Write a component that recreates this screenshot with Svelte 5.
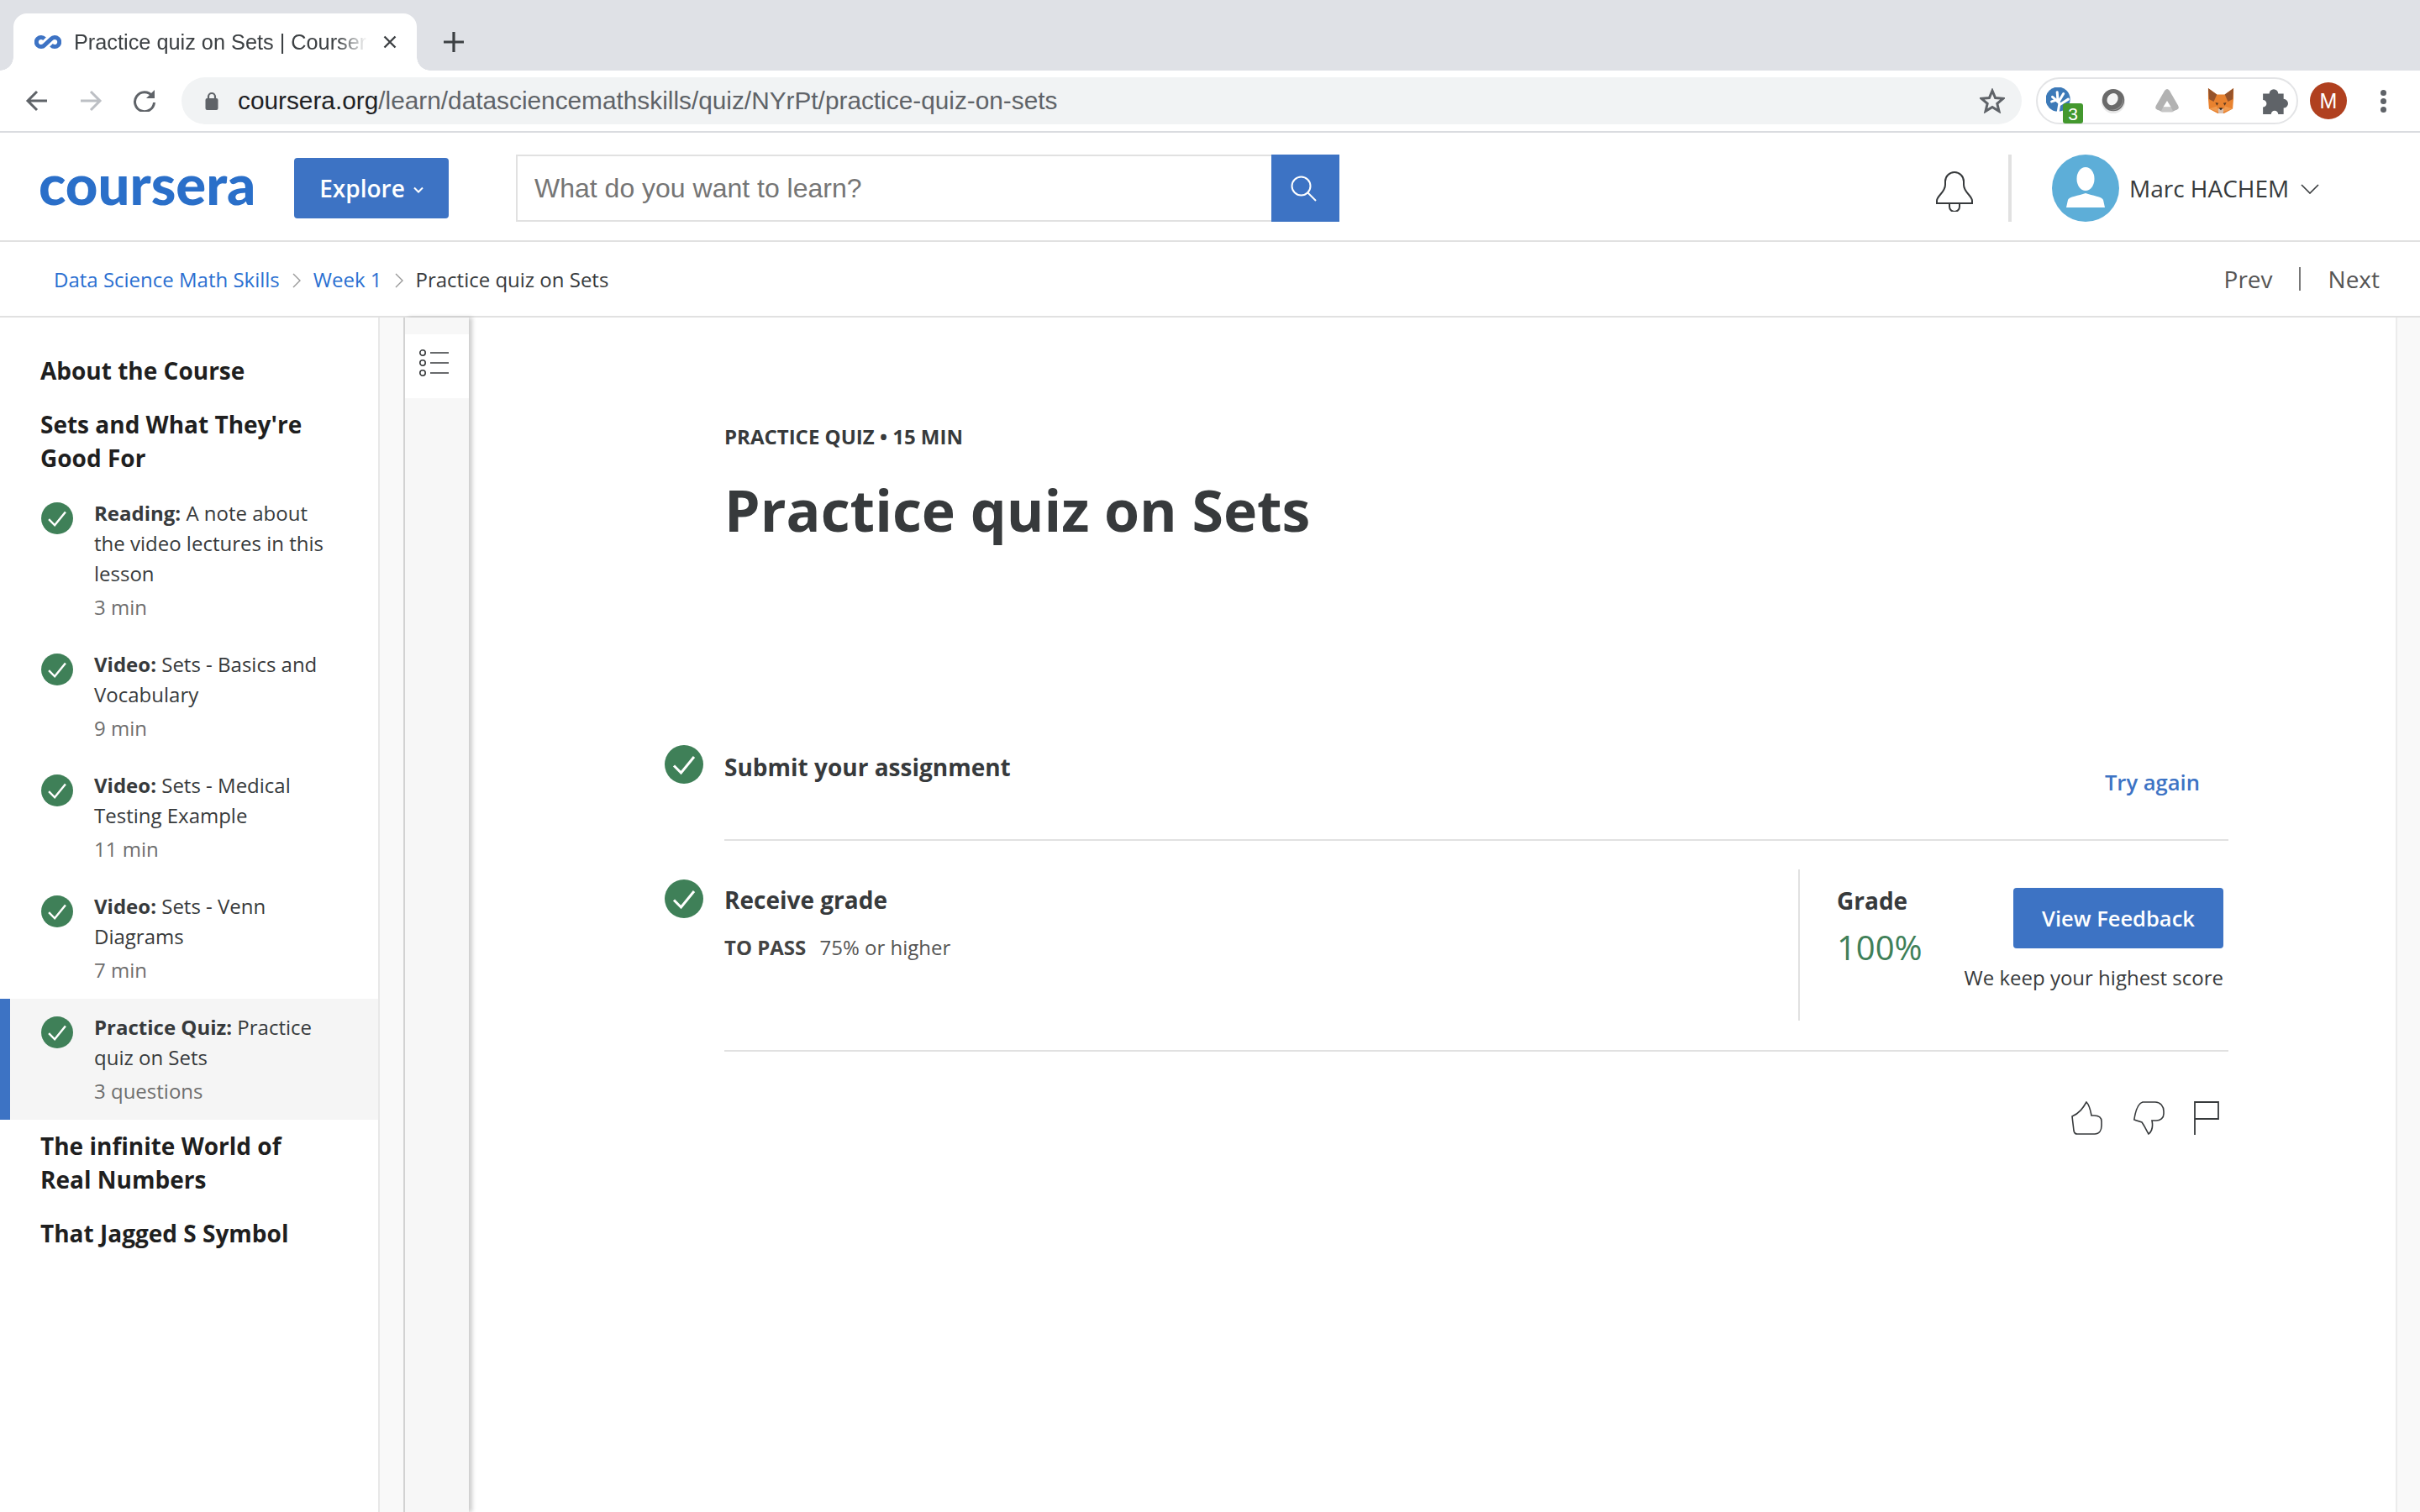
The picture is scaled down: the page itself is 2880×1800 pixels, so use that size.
<script>
  const items = [
    { kind: 'Reading:', text: 'A note about the video lectures in this lesson', meta: '3 min' },
    { kind: 'Video:', text: 'Sets - Basics and Vocabulary', meta: '9 min' },
    { kind: 'Video:', text: 'Sets - Medical Testing Example', meta: '11 min' },
    { kind: 'Video:', text: 'Sets - Venn Diagrams', meta: '7 min' },
    { kind: 'Practice Quiz:', text: 'Practice quiz on Sets', meta: '3 questions', active: true }
  ];
</script>

{#snippet check(cls)}
  <svg class={cls} viewBox="0 0 46 46" aria-hidden="true">
    <circle cx="23" cy="23" r="23" fill="#3f8058" />
    <path d="M11 24.5 L19.5 33 L35 14" fill="none" stroke="#fff" stroke-width="3" />
  </svg>
{/snippet}

<div class="page">
  <div class="tabstrip">
    <div class="tab">
      <svg class="favicon" viewBox="0 0 32 18" aria-hidden="true">
        <path d="M12 5.2 A5.6 5.6 0 1 0 12 12.8 L20 5.2 A5.6 5.6 0 1 1 20 12.8" fill="none" stroke="#3d73c4" stroke-width="5" />
      </svg>
      <span class="tabtitle">Practice quiz on Sets | Courser</span>
      <svg class="tabclose" viewBox="0 0 16 16" aria-hidden="true"><path d="M1.5 1.5 L14.5 14.5 M14.5 1.5 L1.5 14.5" stroke="#3c4043" stroke-width="2.4" /></svg>
    </div>
    <svg class="plus" viewBox="0 0 24 24" aria-hidden="true"><path d="M12 0 V24 M0 12 H24" stroke="#3c4043" stroke-width="3.2" /></svg>
  </div>

  <div class="toolbar">
    <svg class="navicon first" viewBox="0 0 26 26" aria-hidden="true"><path d="M25 13 H3 M13 2 L2 13 L13 24" fill="none" stroke="#5f6368" stroke-width="3" /></svg>
    <svg class="navicon" viewBox="0 0 26 26" aria-hidden="true"><path d="M1 13 H23 M13 2 L24 13 L13 24" fill="none" stroke="#bcbfc4" stroke-width="3" /></svg>
    <svg class="navicon" viewBox="0 0 28 26" aria-hidden="true"><path d="M23 7 A11.5 11.5 0 1 0 25.5 15" fill="none" stroke="#5f6368" stroke-width="3" /><path d="M26 0 V10 H16 Z" fill="#5f6368" /></svg>
    <div class="omnibox">
      <svg class="lock" viewBox="0 0 16 22" aria-hidden="true"><path d="M4 9 V6 A4 4 0 0 1 12 6 V9" fill="none" stroke="#5f6368" stroke-width="2.2" /><rect x="0.5" y="8" width="15" height="14" rx="2" fill="#5f6368" /></svg>
      <span class="url"><b>coursera.org</b>/learn/datasciencemathskills/quiz/NYrPt/practice-quiz-on-sets</span>
      <svg class="star" viewBox="0 0 30 30" aria-hidden="true"><path d="M15 3 L18.6 11.6 L27.8 12.3 L20.8 18.3 L23 27.4 L15 22.5 L7 27.4 L9.2 18.3 L2.2 12.3 L11.4 11.6 Z" fill="none" stroke="#5f6368" stroke-width="3" /></svg>
    </div>
    <div class="extensions">
      <div class="ext">
        <svg viewBox="0 0 34 34" aria-hidden="true">
          <circle cx="15" cy="15" r="15.5" fill="#3d7ab8" />
          <path d="M15 32 L17 20 L8 12 M13 16 L7 18 M15 18 L14 6 M16 18 L22 8 M17 22 L28 15" fill="none" stroke="#fff" stroke-width="3.2" stroke-linecap="round" />
        </svg>
        <span class="badge">3</span>
      </div>
      <div class="ext">
        <svg viewBox="0 0 34 34" aria-hidden="true">
          <circle cx="17" cy="18" r="15" fill="#e8e8e8" />
          <circle cx="17" cy="16" r="14" fill="#6a6a6a" />
          <path d="M29 12 A13 13 0 0 1 12 28 A14 14 0 0 0 29 12 Z" fill="#9c9c9c" />
          <ellipse cx="16" cy="15" rx="6.5" ry="8" fill="#f4f4f4" transform="rotate(35 16 15)" />
        </svg>
      </div>
      <div class="ext">
        <svg viewBox="0 0 34 34" aria-hidden="true">
          <path d="M17 2 C18 2 19 3 20 4 L31 23 C32 25 32 27 30 28 L23 31 H11 L4 28 C2 27 2 25 3 23 L14 4 C15 3 16 2 17 2 Z" fill="#b2b2b2" />
          <path d="M17 17 L12 25 H22 Z" fill="#fff" />
          <path d="M12 25 H22 L25 31 H9 Z" fill="#c6c6c6" />
        </svg>
      </div>
      <div class="ext">
        <svg viewBox="0 0 34 34" aria-hidden="true">
          <path d="M1 1 L12 9 H22 L33 1 L33 14 L32 27 L21 33 H13 L2 27 L1 14 Z" fill="#e8822f" />
          <path d="M1 1 L12 9 L8 18 L2 15 Z" fill="#96532a" />
          <path d="M33 1 L22 9 L26 18 L32 15 Z" fill="#96532a" />
          <path d="M10 19 L14 20 L12 23 Z M24 19 L20 20 L22 23 Z" fill="#5c3a20" />
          <path d="M13 27 L21 27 L20 33 H14 Z" fill="#d7c1b3" />
          <path d="M14.5 26 H19.5 L17 29 Z" fill="#1c1c1c" />
          <path d="M2 27 L12 24 L14 31 Z M32 27 L22 24 L20 31 Z" fill="#f09a4e" />
        </svg>
      </div>
      <div class="ext">
        <svg viewBox="0 0 30 30" aria-hidden="true">
          <path d="M2 7 H9 A5 5 0 0 1 19 7 H25 V13 A5 5 0 0 1 25 23 V30 H19 A4 4 0 0 0 11 30 H2 V22 A4 4 0 0 0 2 14 Z" fill="#5f6368" />
        </svg>
      </div>
    </div>
    <span class="profile">M</span>
    <span class="dots"><i></i><i></i><i></i></span>
  </div>

  <header class="siteheader">
    <span class="logo">coursera</span>
    <button class="explore">Explore <svg viewBox="0 0 12 8" aria-hidden="true"><path d="M1 1.5 L6 6.5 L11 1.5" fill="none" stroke="#fff" stroke-width="2" /></svg></button>
    <div class="search">
      <span class="placeholder">What do you want to learn?</span>
      <span class="searchbtn">
        <svg viewBox="0 0 32 32" aria-hidden="true"><circle cx="13.5" cy="13.5" r="11" fill="none" stroke="#fff" stroke-width="2" /><path d="M21.5 21.5 L31 31" stroke="#fff" stroke-width="2" /></svg>
      </span>
    </div>
    <svg class="bell" viewBox="0 0 44 48" aria-hidden="true">
      <path d="M1 38 V35 C1 29 11 25 11 16 V12 A11 11 0 0 1 33 12 V16 C33 25 43 29 43 35 V38 Z M16 38 V42 A6 6 0 0 0 28 42 V38" fill="none" stroke="#373a3c" stroke-width="2" />
    </svg>
    <span class="vrule"></span>
    <span class="avatar">
      <svg viewBox="0 0 80 80" aria-hidden="true">
        <ellipse cx="40" cy="29" rx="10.5" ry="14" fill="#fff" />
        <path d="M17 63 L19 54 C20 50 32 49 40 46 C48 49 60 50 61 54 L63 63 Z" fill="#fff" />
      </svg>
    </span>
    <span class="username">Marc HACHEM</span>
    <svg class="userchev" viewBox="0 0 22 12" aria-hidden="true"><path d="M1 1 L11 11 L21 1" fill="none" stroke="#373a3c" stroke-width="1.6" /></svg>
  </header>

  <nav class="crumbs">
    <a href="#c">Data Science Math Skills</a>
    <svg viewBox="0 0 10 18" aria-hidden="true"><path d="M1 1 L9 9 L1 17" fill="none" stroke="#999" stroke-width="1.4" /></svg>
    <a href="#w">Week 1</a>
    <svg viewBox="0 0 10 18" aria-hidden="true"><path d="M1 1 L9 9 L1 17" fill="none" stroke="#999" stroke-width="1.4" /></svg>
    <span>Practice quiz on Sets</span>
    <div class="pager"><span>Prev</span><i></i><span>Next</span></div>
  </nav>

  <div class="body">
    <aside class="sidebar">
      <h3>About the Course</h3>
      <h3>Sets and What They're Good For</h3>
      <ul>
        {#each items as item}
          <li class:active={item.active}>
            {@render check('smallcheck')}
            <div>
              <p><b>{item.kind}</b> {item.text}</p>
              <small>{item.meta}</small>
            </div>
          </li>
        {/each}
      </ul>
      <h3>The infinite World of Real Numbers</h3>
      <h3>That Jagged S Symbol</h3>
    </aside>

    <div class="gutter"></div>

    <div class="rail">
      <span class="railbtn">
        <svg viewBox="0 0 36 32" aria-hidden="true">
          <g fill="none" stroke="#373a3c" stroke-width="1.6">
            <circle cx="4" cy="4" r="3.2" /><circle cx="4" cy="16" r="3.2" /><circle cx="4" cy="28" r="3.2" />
            <path d="M13 4 H35 M13 16 H35 M13 28 H35" />
          </g>
        </svg>
      </span>
    </div>

    <main class="main">
      <div class="eyebrow">PRACTICE QUIZ • 15 MIN</div>
      <h1>Practice quiz on Sets</h1>

      <section class="submit">
        {@render check('bigcheck')}
        <h2>Submit your assignment</h2>
        <a class="again" href="#a">Try again</a>
      </section>

      <section class="receive">
        {@render check('bigcheck')}
        <div class="pass">
          <h2>Receive grade</h2>
          <p><b>TO PASS</b> 75% or higher</p>
        </div>
        <div class="grade">
          <div>
            <h2>Grade</h2>
            <div class="score">100%</div>
          </div>
          <div class="feedback">
            <button>View Feedback</button>
            <span>We keep your highest score</span>
          </div>
        </div>
      </section>

      <div class="reactions">
        <svg class="thumb" viewBox="0 0 38 40" aria-hidden="true"><path d="M18 1 C14 8 10 14 1 18 L3 35 C3.5 38 5 39 7 39 H28 C33 39 36 35 36 29 V24 C36 19 32 17 27 17 H24 C23 12 22 5 18 1 Z" fill="none" stroke="#373a3c" stroke-width="1.6" /></svg>
        <svg class="thumb down" viewBox="0 0 38 40" aria-hidden="true"><path d="M11 1 H26 C32 1 36 6 36 12 V15 C36 20 32 23 27 23 H22 C23 28 23 35 18 39 C15 34 13 29 10 25 L0.8 22 C2 14 4 3 11 1 Z" fill="none" stroke="#373a3c" stroke-width="1.6" /></svg>
        <svg class="flag" viewBox="0 0 30 40" aria-hidden="true"><path d="M1 40 V1 H29 V21 H1" fill="none" stroke="#373a3c" stroke-width="1.8" /></svg>
      </div>
    </main>

    <div class="edge"></div>
  </div>
</div>

<style>
  :global(body) { margin: 0; background: #fff; }
  .page { width: 2880px; height: 1800px; overflow: hidden; display: flex; flex-direction: column; font-family: "Open Sans", "Noto Sans", sans-serif; color: #373a3c; }
  p, h1, h2, h3, ul { margin: 0; padding: 0; }
  a { color: #2a6fd1; text-decoration: none; }
  button { border: 0; font-family: inherit; color: #fff; background: #3d73c4; border-radius: 4px; }

  .tabstrip { height: 84px; flex: none; background: #dfe1e6; display: flex; align-items: flex-end; padding-left: 16px; box-sizing: border-box; }
  .tab { position: relative; width: 480px; height: 68px; background: #fff; border-radius: 16px 16px 0 0; display: flex; align-items: center; box-sizing: border-box; padding: 0 24px 0 25px; }
  .tab::before, .tab::after { content: ""; position: absolute; bottom: 0; width: 16px; height: 16px; background: radial-gradient(circle at var(--cx) 0, #dfe1e6 15.5px, #fff 16px); }
  .tab::before { left: -16px; --cx: 0; }
  .tab::after { right: -16px; --cx: 16px; }
  .favicon { width: 32px; height: 18px; flex: none; }
  .tabtitle { font: 25.3px "Liberation Sans", sans-serif; color: #3c4043; margin-left: 15px; width: 349px; white-space: nowrap; overflow: hidden; -webkit-mask-image: linear-gradient(to right, #000 90%, transparent); mask-image: linear-gradient(to right, #000 90%, transparent); }
  .tabclose { width: 16px; height: 16px; margin-left: 19px; flex: none; }
  .plus { width: 24px; height: 24px; margin: 0 0 22px 32px; }

  .toolbar { height: 74px; flex: none; box-sizing: border-box; border-bottom: 2px solid #dadce0; display: flex; align-items: center; }
  .navicon { width: 28px; height: 26px; margin-left: 36px; }
  .navicon.first { margin-left: 30px; }
  .omnibox { width: 2190px; height: 56px; margin-left: 30px; border-radius: 28px; background: #f1f3f4; display: flex; align-items: center; box-sizing: border-box; padding: 0 20px 0 28px; }
  .lock { width: 16px; height: 22px; }
  .url { font: 29.8px "Liberation Sans", sans-serif; color: #5f6368; margin-left: 23px; flex: 1; white-space: nowrap; }
  .url b { font-weight: 400; color: #202124; }
  .star { width: 30px; height: 30px; }
  .extensions { width: 312px; height: 56px; box-sizing: border-box; margin-left: 17px; border: 2px solid #e3e4e6; border-radius: 28px; display: flex; align-items: center; padding-left: 6px; gap: 24px; }
  .ext { position: relative; width: 40px; height: 40px; display: flex; align-items: center; justify-content: center; }
  .ext svg { width: 32px; height: 32px; }
  .badge { position: absolute; left: 24px; top: 23px; width: 24px; height: 24px; background: #43982e; color: #fff; border-radius: 3px; font: 21px/25px "Liberation Sans", sans-serif; text-align: center; }
  .profile { width: 44px; height: 44px; border-radius: 50%; background: #b0401f; color: #fff; margin-left: 14px; font: 25px/44px "Liberation Sans", sans-serif; text-align: center; }
  .dots { margin-left: 40px; display: flex; flex-direction: column; gap: 3px; }
  .dots i { width: 7px; height: 7px; border-radius: 50%; background: #5f6368; }

  .siteheader { height: 130px; flex: none; box-sizing: border-box; border-bottom: 2px solid #e1e1e1; display: flex; align-items: center; position: relative; }
  .logo { width: 255px; margin-left: 46px; font: 900 67px/1 Lato, sans-serif; letter-spacing: 0; color: #2a6fc9; white-space: nowrap; padding-bottom: 8px; }
  .explore { width: 184px; height: 72px; margin-left: 49px; margin-top: 4px; font-size: 28px; font-weight: 600; display: flex; align-items: center; justify-content: center; gap: 10px; padding: 0; }
  .explore svg { width: 12px; height: 8px; margin-top: 4px; }
  .search { width: 980px; height: 80px; margin-left: 80px; margin-top: 4px; box-sizing: border-box; border: 2px solid #e1e1e1; border-right: 0; display: flex; align-items: center; justify-content: space-between; }
  .placeholder { font: 32px "Liberation Sans", sans-serif; color: #757575; margin-left: 20px; }
  .searchbtn { width: 81px; height: 80px; margin: -2px 0; background: #3d73c4; display: flex; align-items: center; justify-content: center; }
  .searchbtn svg { width: 32px; height: 32px; margin-right: 6px; }
  .bell { width: 44px; height: 48px; margin-left: 710px; margin-top: 12px; }
  .vrule { width: 4px; height: 80px; background: #e1e1e1; margin-left: 42px; margin-top: 4px; }
  .avatar { width: 80px; height: 80px; border-radius: 50%; background: #5daed8; margin-left: 48px; margin-top: 4px; display: block; }
  .avatar svg { width: 80px; height: 80px; display: block; }
  .username { font-size: 28px; margin-left: 12px; margin-top: 4px; white-space: nowrap; }
  .userchev { width: 22px; height: 12px; margin-left: 14px; margin-top: 6px; }

  .crumbs { height: 90px; flex: none; box-sizing: border-box; border-bottom: 2px solid #e1e1e1; display: flex; align-items: center; padding: 0 48px 0 64px; font-size: 24px; }
  .crumbs svg { width: 10px; height: 18px; margin: 4px 15px 0 15px; }
  .pager { margin-left: auto; display: flex; align-items: center; font-size: 28px; color: #555; }
  .pager i { width: 2px; height: 28px; background: #777; margin: 0 33px 0 31px; }

  .body { flex: 1; display: flex; min-height: 0; }
  .sidebar { width: 452px; flex: none; box-sizing: border-box; border-right: 2px solid #e8e8e8; padding-top: 43px; }
  .sidebar h3 { font-size: 28px; font-weight: 700; line-height: 40px; margin: 0 70px 24px 48px; color: #1f1f1f; }
  .sidebar ul { list-style: none; margin: -12px 0 11px; }
  .sidebar li { display: flex; gap: 25px; padding: 16px 60px 16px 49px; box-sizing: border-box; }
  .sidebar li.active { background: #f5f5f5; box-shadow: inset 12px 0 0 #3d73c4; }
  .smallcheck { width: 38px; height: 38px; flex: none; margin-top: 5px; }
  .sidebar li p { font-size: 24px; line-height: 36px; color: #373a3c; }
  .sidebar small { display: block; font-size: 24px; line-height: 36px; padding-top: 4px; color: #6e6e6e; }

  .gutter { width: 28px; flex: none; background: #f9f9f9; border-right: 2px solid #d4d4d4; }
  .rail { width: 76px; flex: none; background: #f7f7f7; box-shadow: 4px 0 5px rgba(0,0,0,.2); position: relative; padding-top: 20px; }
  .railbtn { display: flex; align-items: center; justify-content: center; height: 76px; background: #fff; }
  .railbtn svg { width: 36px; height: 32px; margin-right: 6px; margin-top: -8px; }

  .main { flex: 1; box-sizing: border-box; padding: 125px 0 0 304px; position: relative; }
  .eyebrow { font-size: 24px; line-height: 34px; font-weight: 700; color: #373a3c; }
  h1 { font-size: 68px; line-height: 88px; font-weight: 700; color: #373a3c; margin-top: 26px; }
  h2 { font-size: 28px; line-height: 40px; font-weight: 700; color: #373a3c; }
  .submit, .receive { width: 1790px; display: flex; border-bottom: 2px solid #e1e1e1; position: relative; box-sizing: border-box; }
  .bigcheck { width: 46px; height: 46px; flex: none; margin-left: -71px; margin-right: 25px; }
  .submit { height: 114px; margin-top: 236px; align-items: flex-start; padding-top: 0; }
  .submit h2 { margin-top: 6px; }
  .again { margin-left: auto; margin-right: 34px; margin-top: 25px; font-size: 25.6px; line-height: 40px; font-weight: 600; color: #3d73c4; }
  .receive { height: 251px; padding-top: 46px; }
  .pass { flex: 1; }
  .pass h2 { margin-top: 4px; }
  .pass p { font-size: 24px; line-height: 34px; margin-top: 20px; color: #555; }
  .pass b { color: #444; margin-right: 10px; font-weight: 700; }
  .grade { width: 512px; height: 180px; margin-top: -12px; box-sizing: border-box; border-left: 2px solid #e1e1e1; padding: 17px 6px 0 44px; display: flex; justify-content: space-between; }
  .score { font-size: 40px; line-height: 56px; color: #3f8058; margin-top: 8px; }
  .feedback { display: flex; flex-direction: column; align-items: flex-end; margin-top: 5px; }
  .feedback button { width: 250px; height: 72px; font-size: 25.5px; font-weight: 600; padding: 0; }
  .feedback span { font-size: 24px; line-height: 34px; margin-top: 18px; white-space: nowrap; color: #373a3c; }

  .reactions { width: 1790px; display: flex; justify-content: flex-end; align-items: flex-start; margin-top: 59px; padding-right: 11px; box-sizing: border-box; }
  .thumb { width: 38px; height: 40px; margin-right: 36px; }
  .thumb.down { margin-right: 34px; }
  .flag { width: 30px; height: 40px; }

  .edge { width: 29px; flex: none; background: #f9f9f9; border-left: 2px solid #ececec; box-sizing: border-box; }
</style>
